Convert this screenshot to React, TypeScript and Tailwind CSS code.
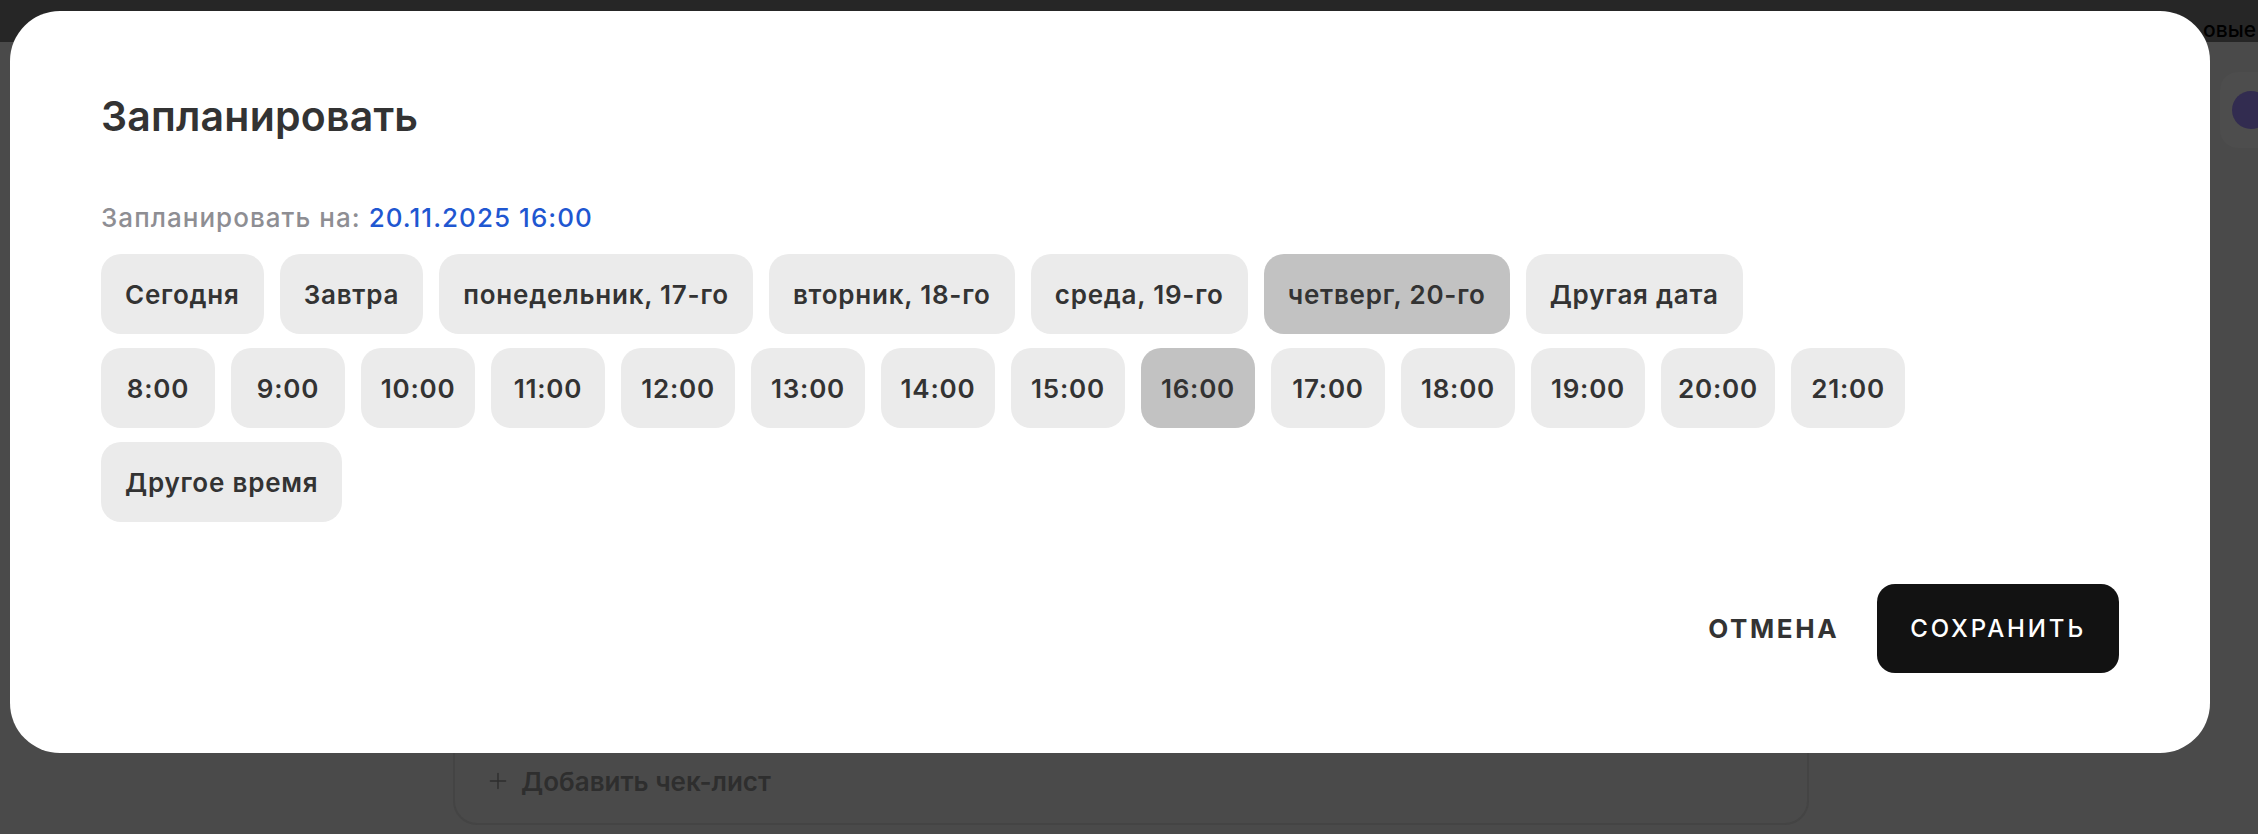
import { Plus } from "lucide-react";

const dates = [
    "Сегодня",
    "Завтра",
    "понедельник, 17-го",
    "вторник, 18-го",
    "среда, 19-го",
    "четверг, 20-го",
    "Другая дата",
];

const times = [
    "8:00", "9:00", "10:00", "11:00", "12:00", "13:00", "14:00",
    "15:00", "16:00", "17:00", "18:00", "19:00", "20:00", "21:00",
];

const font = "font-['Inter','Noto_Sans',sans-serif]";

function Chip({ label, active, fixed }: { label: string; active?: boolean; fixed?: boolean }) {
    return (
        <button
            className={
                "flex h-[80px] items-center justify-center rounded-[20px] text-[26px] font-semibold tracking-[0.03em] text-[#333333] " +
                (fixed ? "w-[114px] " : "px-[24px] ") +
                (active ? "bg-[#c2c2c2]" : "bg-[#ebebeb]")
            }
        >
            {label}
        </button>
    );
}

export default function App() {
    return (
        <div className={`relative flex h-[834px] w-full flex-col overflow-hidden bg-[#4a4a4a] ${font}`}>
            {/* page behind the overlay */}
            <div className="flex h-[42px] shrink-0 items-end justify-end overflow-hidden bg-[#262626] pr-[2px]">
                <span className="text-[21px] font-medium leading-[24px] text-black">овые</span>
            </div>
            <div className="flex flex-1">
                <div className="ml-[453px] flex w-[1356px] flex-col justify-end pb-[9px]">
                    <div className="flex h-[145px] items-end gap-[10px] rounded-[24px] border-2 border-[#444444] px-[30px] pb-[25px]">
                        <Plus className="mb-[4px] h-[26px] w-[26px] text-[#2e2e2e]" strokeWidth={1.3} />
                        <span className="text-[26px] font-semibold leading-[32px] text-[#2e2e2e]">Добавить чек-лист</span>
                    </div>
                </div>
                <div className="ml-auto mt-[30px] flex h-[76px] w-[38px] items-center rounded-l-[18px] bg-[#4d4d4d] pl-[12px]">
                    <div className="h-[38px] w-[38px] shrink-0 rounded-full bg-[#322c50]" />
                </div>
            </div>

            {/* modal */}
            <div className="absolute left-[10px] top-[11px] flex h-[742px] w-[2200px] flex-col rounded-[50px] bg-white px-[91px] pt-[81px] pb-[80px]">
                <h2 className="text-[41px] font-semibold leading-[48px] tracking-[0.005em] text-[#333333]">Запланировать</h2>

                <p className="mt-[62px] text-[26px] font-medium leading-[32px] tracking-[0.04em] text-[#8e8e93]">
                    Запланировать на: <span className="text-[#1f57d1]">20.11.2025 16:00</span>
                </p>

                <div className="mt-[20px] flex gap-[16px]">
                    {dates.map((d) => (
                        <Chip key={d} label={d} active={d === "четверг, 20-го"} />
                    ))}
                </div>

                <div className="mt-[14px] flex flex-wrap gap-x-[16px] gap-y-[14px]">
                    {times.map((t) => (
                        <Chip key={t} label={t} fixed active={t === "16:00"} />
                    ))}
                    <Chip label="Другое время" />
                </div>

                <div className="mt-auto flex items-center justify-end gap-[38px]">
                    <button className="text-[26px] font-bold uppercase tracking-[0.1em] text-[#333333]">Отмена</button>
                    <button className="h-[89px] rounded-[18px] bg-[#121212] px-[33px] text-[24px] font-medium uppercase tracking-[0.12em] text-white">
                        Сохранить
                    </button>
                </div>
            </div>
        </div>
    );
}
